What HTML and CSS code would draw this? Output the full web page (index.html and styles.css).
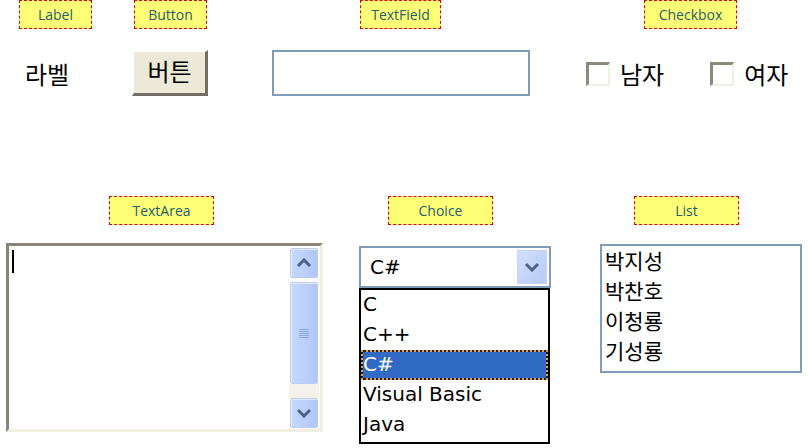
FILE: index.html
```html
<!DOCTYPE html>
<html lang="ko">
<head>
  <meta charset="UTF-8">
  <title>AWT 컴포넌트</title>
  <link rel="stylesheet" href="styles.css">
</head>
<body>
  <div class="canvas">

    <!-- 이름표 -->
    <span class="tag tag-label">Label</span>
    <span class="tag tag-button">Button</span>
    <span class="tag tag-textfield">TextField</span>
    <span class="tag tag-checkbox">Checkbox</span>
    <span class="tag tag-textarea">TextArea</span>
    <span class="tag tag-choice">Choice</span>
    <span class="tag tag-list">List</span>

    <!-- 위쪽 컴포넌트 -->
    <span class="w-label">라벨</span>
    <button class="w-button">버튼</button>
    <div class="w-textfield"></div>

    <div class="w-checks">
      <label class="check"><span class="box"></span>남자</label>
      <label class="check"><span class="box"></span>여자</label>
    </div>

    <!-- TextArea -->
    <div class="w-textarea">
      <div class="ta-body"><span class="caret"></span></div>
      <div class="scroll">
        <div class="sb-btn">
          <svg viewBox="0 0 14 10" width="14" height="10"><path d="M1 8 L7 2 L13 8" fill="none" stroke="#4d6185" stroke-width="3"/></svg>
        </div>
        <div class="sb-thumb">
          <span class="grip"></span>
        </div>
        <div class="sb-track"></div>
        <div class="sb-btn">
          <svg viewBox="0 0 14 10" width="14" height="10"><path d="M1 2 L7 8 L13 2" fill="none" stroke="#4d6185" stroke-width="3"/></svg>
        </div>
      </div>
    </div>

    <!-- Choice -->
    <div class="w-choice">
      <div class="choice-box">
        <span class="choice-value">C#</span>
        <span class="choice-arrow">
          <svg viewBox="0 0 14 10" width="14" height="10"><path d="M1 2 L7 8 L13 2" fill="none" stroke="#4d6185" stroke-width="3"/></svg>
        </span>
      </div>
      <ul class="choice-list">
        <li>C</li>
        <li>C++</li>
        <li class="selected">C#</li>
        <li>Visual Basic</li>
        <li>Java</li>
      </ul>
    </div>

    <!-- List -->
    <ul class="w-list">
      <li>박지성</li>
      <li>박찬호</li>
      <li>이청룡</li>
      <li>기성룡</li>
    </ul>

  </div>
</body>
</html>
```

FILE: styles.css
```css
* {
  margin: 0;
  padding: 0;
  box-sizing: border-box;
}

body {
  background-color: white;
  font-family: 'Noto Sans CJK KR', 'Noto Sans', sans-serif;
  color: black;
}

/* 폼 디자이너 캔버스 - 위치 자체가 내용 */
.canvas {
  position: relative;
  width: 808px;
  height: 448px;
  overflow: hidden;
}

.tag {
  position: absolute;
  height: 29px;
  background-color: #ffff77;
  border: 1px dashed #e00000;
  color: #25606f;
  font-family: 'Open Sans', 'Noto Sans', sans-serif;
  font-size: 14px;
  display: flex;
  align-items: center;
  justify-content: center;
  padding-bottom: 1px;
}

.tag-label { left: 19px; top: 0; width: 73px; }
.tag-button { left: 134px; top: 0; width: 73px; }
.tag-textfield { left: 360px; top: 0; width: 81px; }
.tag-checkbox { left: 644px; top: 0; width: 93px; }
.tag-textarea { left: 109px; top: 196px; width: 105px; }
.tag-choice { left: 388px; top: 196px; width: 105px; }
.tag-list { left: 634px; top: 196px; width: 105px; }

.w-label {
  position: absolute;
  left: 25px;
  top: 56px;
  font-size: 24px;
  line-height: 36px;
}

.w-button {
  position: absolute;
  left: 132px;
  top: 50px;
  width: 76px;
  height: 46px;
  background-color: #ece9d8;
  border-top: 2px solid #fff;
  border-left: 2px solid #fff;
  border-right: 3px solid #716f64;
  border-bottom: 3px solid #716f64;
  font-family: 'Noto Sans CJK KR', sans-serif;
  font-size: 24px;
  line-height: 1;
  padding-bottom: 4px;
}

.w-textfield {
  position: absolute;
  left: 272px;
  top: 50px;
  width: 258px;
  height: 46px;
  border: 2px solid #7f9db9;
  background: white;
}

.w-checks {
  position: absolute;
  left: 586px;
  top: 56px;
  display: flex;
  gap: 46px;
}

.check {
  display: flex;
  align-items: center;
  gap: 10px;
  font-size: 24px;
  line-height: 36px;
}

.check .box {
  width: 24px;
  height: 24px;
  border-top: 3px solid #8d8a7c;
  border-left: 3px solid #8d8a7c;
  border-right: 2px solid #f1efe2;
  border-bottom: 2px solid #f1efe2;
  background: white;
}

/* TextArea */
.w-textarea {
  position: absolute;
  left: 6px;
  top: 243px;
  width: 317px;
  height: 189px;
  border-top: 3px solid #8a8677;
  border-left: 3px solid #8a8677;
  border-right: 3px solid #f1efe2;
  border-bottom: 3px solid #f1efe2;
  background: white;
  display: flex;
}

.ta-body {
  flex: 1;
  padding: 4px 0 0 3px;
}

.caret {
  display: block;
  width: 2px;
  height: 23px;
  background: black;
}

.scroll {
  width: 31px;
  padding: 2px 2px 1px 1px;
  display: flex;
  flex-direction: column;
  gap: 4px;
  background: #fdfdfb;
}

.sb-btn,
.sb-thumb {
  border: 1px solid #b9cdf7;
  border-radius: 2px;
  background: linear-gradient(to right, #c6d7fc, #bcd0fb 50%, #b0c6f6);
  box-shadow: inset 1px 1px 0 #e6eefc;
  display: flex;
  align-items: center;
  justify-content: center;
}

.sb-btn {
  height: 30px;
}

.sb-thumb {
  height: 102px;
}

.sb-track {
  flex: 1;
  background: #f3f1ea;
  margin: -4px -1px;
}

.grip {
  width: 10px;
  height: 9px;
  background: repeating-linear-gradient(to bottom, #8ba8ea 0 1px, transparent 1px 2px);
}

/* Choice */
.w-choice {
  position: absolute;
  left: 359px;
  top: 246px;
  width: 192px;
}

.choice-box {
  height: 42px;
  border: 2px solid #7f9db9;
  background: white;
  display: flex;
  align-items: center;
  justify-content: space-between;
  padding: 0 2px 0 9px;
}

.choice-value,
.choice-list li {
  font-family: 'DejaVu Sans', sans-serif;
  font-size: 20px;
}

.choice-arrow {
  width: 30px;
  height: 34px;
  border: 1px solid #c3d3fd;
  background: linear-gradient(to bottom right, #d2defc, #b6cbf9);
  display: flex;
  align-items: center;
  justify-content: center;
}

.choice-list {
  list-style: none;
  width: 191px;
  border: 2px solid black;
  background: white;
  height: 156px;
}

.choice-list li {
  height: 30px;
  line-height: 28px;
  padding-left: 2px;
}

.choice-list li.selected {
  background-color: #316ac5;
  color: white;
  outline: 2px dotted #e8a33a;
  outline-offset: -2px;
  border: 2px solid #1d1d1d;
  line-height: 24px;
  padding-left: 0;
}

/* List */
.w-list {
  position: absolute;
  left: 600px;
  top: 244px;
  width: 202px;
  height: 129px;
  border: 2px solid #7f9db9;
  list-style: none;
  padding: 0 0 0 3px;
}

.w-list li {
  font-size: 21px;
  line-height: 29px;
  height: 30px;
}
```
